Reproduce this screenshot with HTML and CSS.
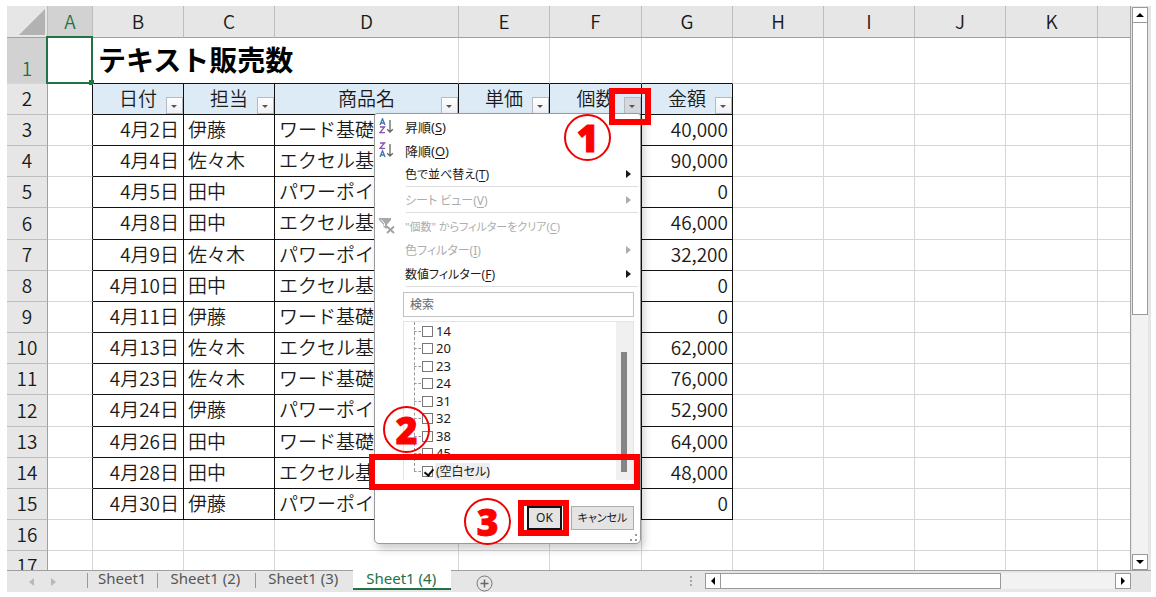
FILE: index.html
```
<!DOCTYPE html>
<html lang="ja">
<head>
<meta charset="utf-8">
<title>テキスト販売数</title>
<link rel="stylesheet" href="styles.css">
</head>
<body>
<main class="app">
  <div class="workspace">
    <div class="sheet">
      <table class="grid">
        <colgroup>
          <col class="col-index"><col class="col-a"><col class="col-std"><col class="col-std"><col class="col-name"><col class="col-std"><col class="col-wide"><col class="col-std"><col class="col-std"><col class="col-std"><col class="col-std"><col class="col-wide"><col>
        </colgroup>
        <thead>
          <tr>
            <th class="corner"><svg width="26" height="26" viewBox="0 0 26 26" aria-hidden="true"><path d="M26 0V26H0Z" fill="#b2b2b2"/></svg></th>
            <th class="active">A</th><th>B</th><th>C</th><th>D</th><th>E</th><th>F</th><th>G</th><th>H</th><th>I</th><th>J</th><th>K</th><th></th>
          </tr>
        </thead>
        <tbody>
          <tr class="title-row"><th class="active">1</th><td class="selected"><span class="selection"></span></td><td class="title" colspan="3">テキスト販売数</td><td class="top"></td><td class="top"></td><td class="top"></td><td></td><td></td><td></td><td></td><td></td></tr>
          <tr class="head"><th>2</th><td class="edge"></td>
            <td class="d">日付<button class="filter" aria-label="日付フィルター"></button></td>
            <td class="d">担当<button class="filter" aria-label="担当フィルター"></button></td>
            <td class="d">商品名<button class="filter" aria-label="商品名フィルター"></button></td>
            <td class="d">単価<button class="filter" aria-label="単価フィルター"></button></td>
            <td class="d">個数<button class="filter open" aria-label="個数フィルター"></button></td>
            <td class="d">金額<button class="filter" aria-label="金額フィルター"></button></td>
            <td></td><td></td><td></td><td></td><td></td></tr>
          <tr><th>3</th><td class="edge"></td><td class="d num">4月2日</td><td class="d">伊藤</td><td class="d">ワード基礎</td><td class="d"></td><td class="d"></td><td class="d num">40,000</td><td></td><td></td><td></td><td></td><td></td></tr>
          <tr><th>4</th><td class="edge"></td><td class="d num">4月4日</td><td class="d">佐々木</td><td class="d">エクセル基礎</td><td class="d"></td><td class="d"></td><td class="d num">90,000</td><td></td><td></td><td></td><td></td><td></td></tr>
          <tr><th>5</th><td class="edge"></td><td class="d num">4月5日</td><td class="d">田中</td><td class="d">パワーポイント</td><td class="d"></td><td class="d"></td><td class="d num">0</td><td></td><td></td><td></td><td></td><td></td></tr>
          <tr><th>6</th><td class="edge"></td><td class="d num">4月8日</td><td class="d">田中</td><td class="d">エクセル基礎</td><td class="d"></td><td class="d"></td><td class="d num">46,000</td><td></td><td></td><td></td><td></td><td></td></tr>
          <tr><th>7</th><td class="edge"></td><td class="d num">4月9日</td><td class="d">佐々木</td><td class="d">パワーポイント</td><td class="d"></td><td class="d"></td><td class="d num">32,200</td><td></td><td></td><td></td><td></td><td></td></tr>
          <tr><th>8</th><td class="edge"></td><td class="d num">4月10日</td><td class="d">田中</td><td class="d">エクセル基礎</td><td class="d"></td><td class="d"></td><td class="d num">0</td><td></td><td></td><td></td><td></td><td></td></tr>
          <tr><th>9</th><td class="edge"></td><td class="d num">4月11日</td><td class="d">伊藤</td><td class="d">ワード基礎</td><td class="d"></td><td class="d"></td><td class="d num">0</td><td></td><td></td><td></td><td></td><td></td></tr>
          <tr><th>10</th><td class="edge"></td><td class="d num">4月13日</td><td class="d">佐々木</td><td class="d">エクセル基礎</td><td class="d"></td><td class="d"></td><td class="d num">62,000</td><td></td><td></td><td></td><td></td><td></td></tr>
          <tr><th>11</th><td class="edge"></td><td class="d num">4月23日</td><td class="d">佐々木</td><td class="d">ワード基礎</td><td class="d"></td><td class="d"></td><td class="d num">76,000</td><td></td><td></td><td></td><td></td><td></td></tr>
          <tr><th>12</th><td class="edge"></td><td class="d num">4月24日</td><td class="d">伊藤</td><td class="d">パワーポイント</td><td class="d"></td><td class="d"></td><td class="d num">52,900</td><td></td><td></td><td></td><td></td><td></td></tr>
          <tr><th>13</th><td class="edge"></td><td class="d num">4月26日</td><td class="d">田中</td><td class="d">ワード基礎</td><td class="d"></td><td class="d"></td><td class="d num">64,000</td><td></td><td></td><td></td><td></td><td></td></tr>
          <tr><th>14</th><td class="edge"></td><td class="d num">4月28日</td><td class="d">田中</td><td class="d">エクセル基礎</td><td class="d"></td><td class="d"></td><td class="d num">48,000</td><td></td><td></td><td></td><td></td><td></td></tr>
          <tr><th>15</th><td class="edge"></td><td class="d num">4月30日</td><td class="d">伊藤</td><td class="d">パワーポイント</td><td class="d"></td><td class="d"></td><td class="d num">0</td><td></td><td></td><td></td><td></td><td></td></tr>
          <tr><th>16</th><td></td><td></td><td></td><td></td><td></td><td></td><td></td><td></td><td></td><td></td><td></td><td></td></tr>
          <tr><th>17</th><td></td><td></td><td></td><td></td><td></td><td></td><td></td><td></td><td></td><td></td><td></td><td></td></tr>
        </tbody>
      </table>

      <div class="popup">
        <ul class="menu">
          <li><button class="item large"><svg class="icon" viewBox="0 0 16 16" aria-hidden="true"><g fill="none" stroke-width="1.3"><path stroke="#3f74b5" d="M1 7 3.5 .8 6 7M1.9 5H5.1"/><path stroke="#8a4fae" d="M1 9H5.6L1 14.6H6"/><path stroke="#666" d="M11 2V14M8.2 11.2 11 14 13.8 11.2"/></g></svg><span class="label">昇順(<u>S</u>)</span></button></li>
          <li><button class="item large"><svg class="icon" viewBox="0 0 16 16" aria-hidden="true"><g fill="none" stroke-width="1.3"><path stroke="#8a4fae" d="M1 1H5.6L1 6.4H6"/><path stroke="#3f74b5" d="M1 15 3.5 8.8 6 15M1.9 13H5.1"/><path stroke="#666" d="M11 2V14M8.2 11.2 11 14 13.8 11.2"/></g></svg><span class="label">降順(<u>O</u>)</span></button></li>
          <li><button class="item"><span class="icon"></span><span class="label">色で並べ替え(<u>T</u>)</span><span class="arrow"></span></button></li>
          <li class="sep"></li>
          <li><button class="item" disabled><span class="icon"></span><span class="label">シート ビュー(<u>V</u>)</span><span class="arrow"></span></button></li>
          <li class="sep"></li>
          <li><button class="item small" disabled><svg class="icon" viewBox="0 0 16 16" aria-hidden="true"><path fill="#a8a8a8" d="M0 0H12V2L8 6.5V11L4.500 9V6.500L0 2Z"/><path fill="none" stroke="#fff" stroke-width="1" d="M2 1.500 5.500 5.500V8"/><path fill="none" stroke="#a0a0a0" stroke-width="1.800" d="M8 8.500 15 15M15 8.500 8 15"/></svg><span class="label">"個数" からフィルターをクリア(<u>C</u>)</span></button></li>
          <li><button class="item" disabled><span class="icon"></span><span class="label">色フィルター(<u>I</u>)</span><span class="arrow"></span></button></li>
          <li><button class="item"><span class="icon"></span><span class="label">数値フィルター(<u>F</u>)</span><span class="arrow"></span></button></li>
          <li class="sep"></li>
        </ul>
        <input class="search" type="text" placeholder="検索" aria-label="検索">
        <div class="values">
          <ul class="tree">
            <li><label><input type="checkbox"><span>14</span></label></li>
            <li><label><input type="checkbox"><span>20</span></label></li>
            <li><label><input type="checkbox"><span>23</span></label></li>
            <li><label><input type="checkbox"><span>24</span></label></li>
            <li><label><input type="checkbox"><span>31</span></label></li>
            <li><label><input type="checkbox"><span>32</span></label></li>
            <li><label><input type="checkbox"><span>38</span></label></li>
            <li><label><input type="checkbox"><span>45</span></label></li>
            <li><label><input type="checkbox" checked><span class="focus">(空白セル)</span></label></li>
          </ul>
          <div class="track"><div class="thumb"></div></div>
        </div>
        <div class="actions">
          <button class="btn ok">OK</button>
          <button class="btn">キャンセル</button>
        </div>
        <svg class="grip" width="8" height="8" viewBox="0 0 8 8" aria-hidden="true"><path fill="#999" d="M5 0H7V2H5ZM0 5H2V7H0ZM5 5H7V7H5Z"/></svg>
        <span class="mark mark-filter"></span>
        <span class="mark mark-blank"></span>
        <span class="mark mark-ok"></span>
        <span class="step step-1">1</span>
        <span class="step step-2">2</span>
        <span class="step step-3">3</span>
      </div>
    </div>
    <div class="vscroll">
      <button class="sb" aria-label="上へ"><svg width="8" height="4" viewBox="0 0 8 4"><path d="M4 0 8 4H0Z"/></svg></button>
      <div class="vtrack"><div class="vthumb"></div></div>
      <button class="sb" aria-label="下へ"><svg width="8" height="4" viewBox="0 0 8 4"><path d="M0 0H8L4 4Z"/></svg></button>
    </div>
  </div>
  <footer class="bottom">
    <div class="nav">
      <svg width="5" height="8" viewBox="0 0 5 8"><path fill="#b8b8b8" d="M5 0V8L0 4Z"/></svg>
      <svg width="5" height="8" viewBox="0 0 5 8"><path fill="#b8b8b8" d="M0 0 5 4 0 8Z"/></svg>
    </div>
    <nav class="tabs">
      <a class="tab first" href="#s1">Sheet1</a>
      <a class="tab" href="#s2">Sheet1 (2)</a>
      <a class="tab" href="#s3">Sheet1 (3)</a>
      <a class="tab current" href="#s4">Sheet1 (4)</a>
    </nav>
    <button class="add" aria-label="新しいシート"><svg width="17" height="17" viewBox="0 0 17 17"><circle cx="8.5" cy="8.5" r="7.5" fill="none" stroke="#777"/><path d="M8.5 4.5V12.5M4.5 8.5H12.5" stroke="#666" stroke-width="1.5"/></svg></button>
    <svg class="dots" width="3" height="11" viewBox="0 0 3 11" aria-hidden="true"><path fill="#a6a6a6" d="M0 0H2V2H0ZM0 4H2V6H0ZM0 8H2V10H0Z"/></svg>
    <div class="hscroll">
      <button class="sb" aria-label="左へ"><svg width="4" height="8" viewBox="0 0 4 8"><path d="M4 0V8L0 4Z"/></svg></button>
      <div class="htrack"><div class="hthumb"></div></div>
      <button class="sb" aria-label="右へ"><svg width="4" height="8" viewBox="0 0 4 8"><path d="M0 0 4 4 0 8Z"/></svg></button>
    </div>
  </footer>
</main>
</body>
</html>
```
FILE: styles.css
```
* { box-sizing: border-box; }

body {
  margin: 0;
  height: 100vh;
  padding: 6px 5px 5px 7px;
  background: #fff;
  color: #1a1a1a;
  font-family: "Noto Sans CJK JP", sans-serif;
}

button, input { font: inherit; color: inherit; margin: 0; padding: 0; }
button { border: 0; background: none; }
ul { list-style: none; margin: 0; padding: 0; }

.app { display: flex; flex-direction: column; height: 100%; background: #e6e6e6; }
.workspace { display: flex; flex: 1; min-height: 0; }
.sheet { position: relative; flex: 1; min-width: 0; overflow: hidden; border-right: 1px solid #a0a0a0; }

/* Grid */
.grid {
  width: 100%;
  table-layout: fixed;
  border-collapse: separate;
  border-spacing: 0;
  background: #fff;
  font-size: 19px;
  font-weight: 350;
  line-height: 26px;
}
.col-index { width: 41px; }
.col-a { width: 45px; }
.col-std { width: 91px; }
.col-wide { width: 92px; }
.col-name { width: 184px; }

.grid th, .grid td {
  height: 31px;
  padding: 0 4px 3px;
  border-right: 1px solid #d6d6d6;
  border-bottom: 1px solid #d6d6d6;
  white-space: nowrap;
  overflow: hidden;
  text-align: left;
}
.grid tbody tr:nth-child(6n) > * { height: 32px; }
.grid th {
  padding: 0 0 2px;
  background: #e6e6e6;
  border-color: #bdbdbd;
  font-weight: 350;
  text-align: center;
}
.grid tbody th { border-right-color: #a0a0a0; }
.grid thead th { height: 32px; border-bottom-color: #a0a0a0; }
.grid thead th:last-child, .grid td:last-child { border-right: 0; }
.grid th.active { background: #d2d2d2; color: #217346; }
.grid .corner { text-align: right; padding: 0 2px 0 0; }
.corner svg { display: block; margin-left: auto; }

.grid .title-row > * { height: 46px; border-bottom-color: #d6d6d6; }
.grid .title-row th { vertical-align: bottom; }
.grid .title-row .title {
  border-bottom-color: #111;
  padding-left: 5px;
  color: #000;
  font-size: 28px;
  font-weight: 700;
}
.grid .title-row .top { border-bottom-color: #111; }
.grid .title-row .selected { position: relative; overflow: visible; }
.selection { position: absolute; inset: -2px -1px -1px -2px; border: 2px solid #217346; }
.selection::after {
  content: "";
  position: absolute;
  right: -3px;
  bottom: -3px;
  width: 5px;
  height: 5px;
  background: #217346;
}

.grid .edge { border-right-color: #111; }
.grid .d { border-color: #111; }
.grid .num { text-align: right; }
.grid .head .d { position: relative; background: #ddebf7; text-align: center; }

.filter {
  position: absolute;
  right: 0;
  bottom: 0;
  width: 17px;
  height: 17px;
  border: 1px solid #b4b9c2;
  background: linear-gradient(#fff, #eef0f4);
}
.filter::after {
  content: "";
  position: absolute;
  left: 4px;
  top: 7px;
  border: 3px solid transparent;
  border-top-color: #555;
  border-bottom: 0;
}
.filter.open { background: #d5d8dd; }

/* Filter menu */
.popup {
  position: absolute;
  left: 367px;
  top: 107px;
  width: 267px;
  padding-bottom: 13px;
  background: #fff;
  border: 1px solid #9a9a9a;
  border-radius: 3px 3px 5px 5px;
  box-shadow: 3px 5px 9px rgba(0, 0, 0, .2);
  font-family: "Noto Sans", "Noto Sans CJK JP", sans-serif;
  font-size: 12px;
  line-height: 18px;
}
.item { display: flex; align-items: center; width: 100%; height: 24px; padding-left: 4px; text-align: left; }
.item.large { font-size: 13px; }
.item.small { font-size: 11px; }
.icon { width: 16px; height: 16px; flex: none; }
.label { flex: 1; padding: 2px 0 0 10px; font-feature-settings: "palt"; white-space: nowrap; }
.item u { text-underline-offset: 2px; }
.item:disabled { color: #adadad; }
.arrow {
  margin-right: 9px;
  border: 4px solid transparent;
  border-left: 5px solid currentColor;
  border-right: 0;
}
.sep { height: 1px; margin: 0 2px 1px 31px; background: #dedede; }
.search {
  display: block;
  width: 231px;
  height: 25px;
  margin: 5px 0 0 28px;
  padding: 0 6px;
  border: 1px solid #c2c2c2;
  border-radius: 0;
  background: #fff;
}
.search::placeholder { color: #666; opacity: 1; }
.values {
  display: flex;
  justify-content: space-between;
  margin: 4px 6px 0 28px;
  border: 1px solid #e4e4e4;
  border-bottom: 0;
}
.tree { position: relative; padding-left: 10px; }
.tree::before { content: ""; position: absolute; left: 10px; top: 0; bottom: 9px; border-left: 1px dashed #999; }
.tree li { height: 18px; }
.tree li:nth-child(even) { height: 17px; }
.tree label { display: flex; align-items: center; height: 100%; font-size: 13px; }
.tree label::before { content: ""; width: 7px; margin-right: 1px; border-top: 1px dashed #999; }
.tree input {
  appearance: none;
  width: 11px;
  height: 11px;
  margin-right: 2px;
  border: 1px solid #777;
  background: #fff;
  position: relative;
}
.tree input:checked::after {
  content: "";
  position: absolute;
  left: 3px;
  top: 0;
  width: 4px;
  height: 7px;
  border: solid #111;
  border-width: 0 2px 2px 0;
  transform: rotate(40deg);
}
.tree span { padding-left: 1px; line-height: 17px; font-feature-settings: "palt"; }
.tree .focus { background: #eee; font-size: 12px; }
.track { width: 17px; padding: 30px 6px 8px 5px; background: #f0f0f0; }
.thumb { height: 100%; background: #848484; }
.actions { display: flex; justify-content: flex-end; gap: 9px; margin: 26px 6px 0 0; }
.btn {
  width: 63px;
  height: 24px;
  border: 1px solid #adadad;
  background: #e4e4e4;
  font-size: 11px;
  font-feature-settings: "palt";
}
.btn.ok { width: 35px; border: 2px solid #111; font-size: 12px; }
.grip { position: absolute; right: 2px; bottom: 1px; }

/* Callouts */
.mark { position: absolute; border: 6px solid #f00; pointer-events: none; }
.mark-filter { left: 234px; top: -26px; width: 42px; height: 37px; }
.mark-blank { left: -6px; top: 340px; width: 271px; height: 36px; }
.mark-ok { left: 143px; top: 386px; width: 51px; height: 36px; }
.step {
  position: absolute;
  width: 47px;
  height: 47px;
  border: 2px solid #e00;
  border-radius: 50%;
  color: #f00;
  font-size: 37px;
  font-weight: 900;
  line-height: 43px;
  text-align: center;
  -webkit-text-stroke: 1px #f00;
}
.step-1 { left: 189px; top: 0; }
.step-2 { left: 8px; top: 292px; }
.step-3 { left: 89px; top: 384px; }

/* Scroll bars */
.sb {
  display: grid;
  place-items: center;
  flex: none;
  width: 16px;
  height: 16px;
  border: 1px solid #999;
  background: #fff;
}
.vscroll { display: flex; flex-direction: column; width: 20px; padding: 1px 3px 0 1px; }
.vtrack { flex: 1; background: #f2f2f2; }
.vthumb { height: 55%; border: 1px solid #999; border-top: 0; background: #fff; }

.bottom { display: flex; height: 22px; flex: none; padding-right: 20px; border-top: 1px solid #a0a0a0; }
.nav { display: flex; align-items: center; gap: 17px; width: 80px; padding-left: 22px; }
.tabs { display: flex; font: 15px/15px "Noto Sans", sans-serif; }
.tab {
  position: relative;
  padding: 0 15px 0 13px;
  color: #555;
  text-decoration: none;
  white-space: nowrap;
}
.tab::before { content: ""; position: absolute; left: 0; top: 2px; height: 15px; border-left: 1px solid #999; }
.tab.first { padding: 0 11px; }
.tab.current {
  height: 20px;
  margin-top: -1px;
  line-height: 17px;
  background: #fff;
  color: #217346;
  border-bottom: 2px solid #217346;
}
.tab.current::before { display: none; }
.add { margin-left: 25px; align-self: center; height: 17px; }
.dots { margin: 5px 12px 0 auto; }
.hscroll { display: flex; width: 426px; padding-top: 2px; }
.htrack { flex: 1; height: 16px; background: #f2f2f2; }
.hthumb { width: 71%; height: 100%; border: 1px solid #999; border-left: 0; background: #fff; }
```
